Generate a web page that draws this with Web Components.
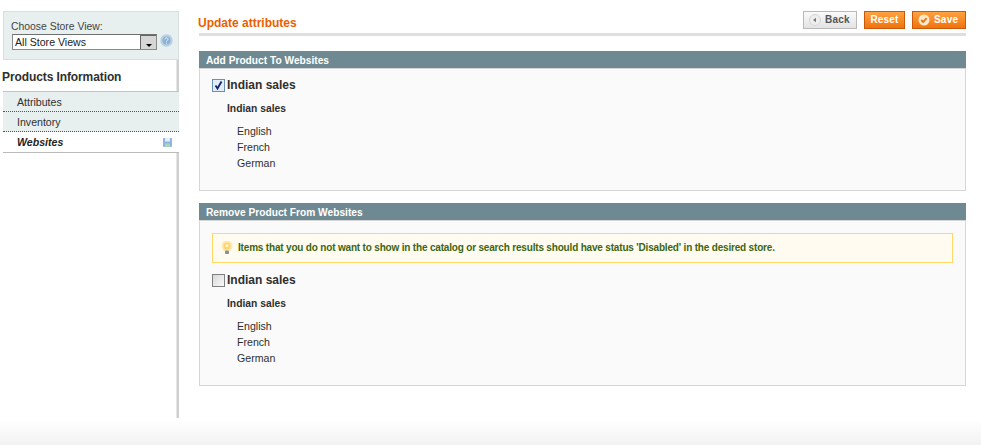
<!DOCTYPE html>
<html>
<head>
<meta charset="utf-8">
<title>Update attributes</title>
<style>
    html, body { margin: 0; height: 100%; background: #fff; }
    body { font: 10.6px/16px "Liberation Sans", Arial, sans-serif; color: #2f2f2f; overflow: hidden; }
</style>
</head>
<body>
<admin-page>
    <store-switcher slot="side"></store-switcher>
    <side-tabs slot="side" title="Products Information">
        <tab-item>Attributes</tab-item>
        <tab-item>Inventory</tab-item>
        <tab-item active>Websites</tab-item>
    </side-tabs>

    <page-head title="Update attributes">
        <admin-button kind="back">Back</admin-button>
        <admin-button kind="reset">Reset</admin-button>
        <admin-button kind="save">Save</admin-button>
    </page-head>

    <field-box title="Add Product To Websites" height="123">
        <site-tree checked></site-tree>
    </field-box>
    <field-box title="Remove Product From Websites" height="166">
        <notice-box>Items that you do not want to show in the catalog or search results should have status 'Disabled' in the desired store.</notice-box>
        <site-tree></site-tree>
    </field-box>
</admin-page>

<script>
// page frame: sidebar column, main column, footer fade
class AdminPage extends HTMLElement {
    constructor() {
        super();
        this.attachShadow({ mode: 'open' });
        this.shadowRoot.innerHTML = `
        <style>
            :host { display: block; height: 445px; }
            .cols { display: flex; height: 420px; align-items: flex-start; }
            .side { width: 176px; margin: 11px 0 0 3px; height: 407px; flex: none;
                    display: flex; flex-direction: column; }
            main { margin: 11px 0 0 20px; width: 767px; flex: none; }
            footer { height: 25px; background: linear-gradient(#fff, #f2f2f2); }
        </style>
        <div class="cols">
            <div class="side"><slot name="side"></slot></div>
            <main><slot></slot></main>
        </div>
        <footer></footer>`;
    }
}

class StoreSwitcher extends HTMLElement {
    constructor() {
        super();
        this.attachShadow({ mode: 'open' });
        this.shadowRoot.innerHTML = `
        <style>
            :host { display: block; box-sizing: border-box; height: 49px; background: #e7efef;
                    border: 1px solid #d6e0e0; padding: 8px 0 0 7px; color: #444; }
            label { display: block; line-height: 14px; font-size: 10.4px; }
            .row { display: flex; align-items: flex-start; gap: 3px; }
            .select { box-sizing: border-box; width: 145px; height: 16px; margin-left: 1px; display: flex; justify-content: space-between;
                      border: 1px solid #8a8a8a; border-top-color: #6f6f6f; background: #fff; color: #222;
                      padding-left: 2px; line-height: 14px; }
            .arrow { box-sizing: border-box; width: 16px; height: 14px; background: #d6d6d6;
                     border-left: 1px solid #666; border-top: 1px solid #666;
                     display: flex; align-items: flex-end; justify-content: center; }
            .arrow i { display: block; width: 0; height: 0; margin-bottom: 2px;
                       border: 3.5px solid transparent; border-top: 3px solid #000; border-bottom: 0; }
            svg { display: block; }
        </style>
        <label>Choose Store View:</label>
        <div class="row">
            <div class="select"><span>All Store Views</span><span class="arrow"><i></i></span></div>
            <svg width="13" height="13" viewBox="0 0 13 13">
                <circle cx="6.5" cy="6.5" r="6.2" fill="#b9d0e4"/>
                <circle cx="6.5" cy="6.5" r="4" fill="#8fb2d0"/>
                <path d="M5 5.3a1.5 1.5 0 1 1 2.2 1.3c-.5.3-.7.5-.7 1M6.5 8.8v.9" fill="none" stroke="#e6f0f8" stroke-width="1"/>
            </svg>
        </div>`;
    }
}

class SideTabs extends HTMLElement {
    constructor() {
        super();
        this.attachShadow({ mode: 'open' });
        this.shadowRoot.innerHTML = `
        <style>
            /* the column rule runs down the right edge, the tabs paint over it */
            :host { display: block; flex: 1; min-height: 0;
                    background: linear-gradient(90deg, #e6e6e6 0 1px, #d0d0d0 1px 3px) right top / 3px 100% no-repeat; }
            h3 { box-sizing: border-box; margin: 0 0 0 -1px; height: 31px; padding-top: 9px; font-size: 12px; line-height: 16px;
                 letter-spacing: -.1px; font-weight: bold; color: #2f2f2f; }
            .tabs { border-top: 1px solid #bdc6c6; }
        </style>
        <h3></h3>
        <div class="tabs"><slot></slot></div>`;
        this.shadowRoot.querySelector('h3').textContent = this.getAttribute('title');
    }
}

class TabItem extends HTMLElement {
    constructor() {
        super();
        this.attachShadow({ mode: 'open' });
        this.shadowRoot.innerHTML = `
        <style>
            :host { display: flex; box-sizing: border-box; height: 20px; align-items: center; justify-content: space-between;
                    padding: 0 7px 0 14px; background: #e7efef; border-bottom: 1px dotted #555; color: #2f2f2f; }
            :host([active]) { background: #fff; border-bottom: 1px solid #bbb; font-weight: bold; font-style: italic; color: #222; height: 21px; }
            svg { display: none; }
            :host([active]) svg { display: block; }
        </style>
        <span><slot></slot></span>
        <svg width="9" height="9" viewBox="0 0 9 9">
            <rect width="9" height="9" rx="1" fill="#8db4e2"/>
            <rect x="2" y="0" width="5" height="3.5" fill="#e4eef9"/>
            <rect x="2" y="5.5" width="5" height="3.5" fill="#a9d8b0"/>
        </svg>`;
    }
}

class PageHead extends HTMLElement {
    constructor() {
        super();
        this.attachShadow({ mode: 'open' });
        this.shadowRoot.innerHTML = `
        <style>
            :host { display: flex; box-sizing: border-box; height: 25px; justify-content: space-between; align-items: flex-start;
                    border-bottom: 3px solid #dfdfdf; margin-bottom: 15px; }
            h3 { margin: 4px 0 0 -1px; font-size: 12px; line-height: 16px; font-weight: bold; color: #eb5e00; }
            .actions { display: flex; gap: 7px; }
        </style>
        <h3></h3>
        <div class="actions"><slot></slot></div>`;
        this.shadowRoot.querySelector('h3').textContent = this.getAttribute('title');
    }
}

class AdminButton extends HTMLElement {
    constructor() {
        super();
        this.attachShadow({ mode: 'open' });
        const icons = {
            back: `<svg width="12" height="12" viewBox="0 0 12 12"><circle cx="6" cy="6" r="5.5" fill="#eee" stroke="#d4d4d4"/><path d="M7 3.8v4.4L4 6z" fill="#777"/></svg>`,
            save: `<svg width="12" height="12" viewBox="0 0 12 12"><circle cx="6" cy="6" r="5.5" fill="#ffe9c9"/><path d="M3.2 6l2 2 3.4-3.8" fill="none" stroke="#e8700f" stroke-width="1.8"/></svg>`,
        };
        this.shadowRoot.innerHTML = `
        <style>
            :host { display: flex; box-sizing: border-box; width: 54px; height: 18px; align-items: center; gap: 4px;
                    font-size: 10px; font-weight: bold; letter-spacing: .2px;
                    padding-left: 5px; border: 1px solid #c9580a; color: #fff;
                    background: linear-gradient(#ffa23f, #f0730f); }
            :host([kind="back"]) { border-color: #b9b9b9; color: #555; background: linear-gradient(#fafafa, #e3e3e3); }
            :host([kind="reset"]) { width: 41px; justify-content: center; padding: 0; }
            svg { display: block; }
        </style>
        ${icons[this.getAttribute('kind')] || ''}<slot></slot>`;
    }
}

class FieldBox extends HTMLElement {
    constructor() {
        super();
        this.attachShadow({ mode: 'open' });
        this.shadowRoot.innerHTML = `
        <style>
            :host { display: block; margin-bottom: 12px; }
            h4 { margin: 0; height: 17px; line-height: 19px; padding-left: 7px; font-size: 10.2px; font-weight: bold;
                 color: #fff; background: #6f8992; }
            .body { box-sizing: border-box; background: #fafafa; border: 1px solid #d6d6d6; padding: 7px 12px 0; }
        </style>
        <h4></h4>
        <div class="body"><slot></slot></div>`;
        this.shadowRoot.querySelector('h4').textContent = this.getAttribute('title');
        this.shadowRoot.querySelector('.body').style.height = this.getAttribute('height') + 'px';
    }
}

class NoticeBox extends HTMLElement {
    constructor() {
        super();
        this.attachShadow({ mode: 'open' });
        this.shadowRoot.innerHTML = `
        <style>
            :host { display: flex; box-sizing: border-box; height: 30px; align-items: center; gap: 5px; margin: 5px 0 8px;
                    padding-left: 8px; background: #fffbf0; border: 1px solid #ffd967; color: #3d6611;
                    font-size: 10px; letter-spacing: -.18px; font-weight: bold; }
            svg { display: block; flex: none; }
        </style>
        <svg width="12" height="14" viewBox="0 0 12 14">
            <circle cx="6" cy="5" r="5.5" fill="#ffe9b0"/>
            <circle cx="6" cy="5" r="3.5" fill="#ffd36a"/>
            <circle cx="6" cy="4.5" r="1.6" fill="#fff6d0"/>
            <rect x="4" y="9.5" width="4" height="3.5" rx=".8" fill="#8b8f95"/>
        </svg>
        <span><slot></slot></span>`;
    }
}

class SiteTree extends HTMLElement {
    constructor() {
        super();
        this.attachShadow({ mode: 'open' });
        const checked = this.hasAttribute('checked');
        this.shadowRoot.innerHTML = `
        <style>
            :host { display: block; }
            .site { display: flex; align-items: center; gap: 2px; height: 18px; font-size: 12px; font-weight: bold; color: #2f2f2f; }
            .box { box-sizing: border-box; width: 13px; height: 13px; border: 1px solid #808080;
                   background: linear-gradient(135deg, #d8d8d8, #fafafa); }
            .box.on { border-color: #6a90b4; background: #e3edf8; }
            .box svg { display: block; }
            .group { margin: 7px 0 0 15px; line-height: 16px; font-weight: bold; font-size: 10.3px; }
            ul { margin: 6px 0 0 25px; padding: 0; list-style: none; }
            li { height: 16px; line-height: 16px; }
        </style>
        <div class="site">
            <span class="box${checked ? ' on' : ''}">${checked ? '<svg width="11" height="11" viewBox="0 0 11 11"><path d="M2.5 5.5l2 3L8.5 1.5" fill="none" stroke="#14246e" stroke-width="1.8"/></svg>' : ''}</span>
            <span>Indian sales</span>
        </div>
        <div class="group">Indian sales</div>
        <ul><li>English</li><li>French</li><li>German</li></ul>`;
    }
}

customElements.define('admin-page', AdminPage);
customElements.define('store-switcher', StoreSwitcher);
customElements.define('side-tabs', SideTabs);
customElements.define('tab-item', TabItem);
customElements.define('page-head', PageHead);
customElements.define('admin-button', AdminButton);
customElements.define('field-box', FieldBox);
customElements.define('notice-box', NoticeBox);
customElements.define('site-tree', SiteTree);
</script>
</body>
</html>
